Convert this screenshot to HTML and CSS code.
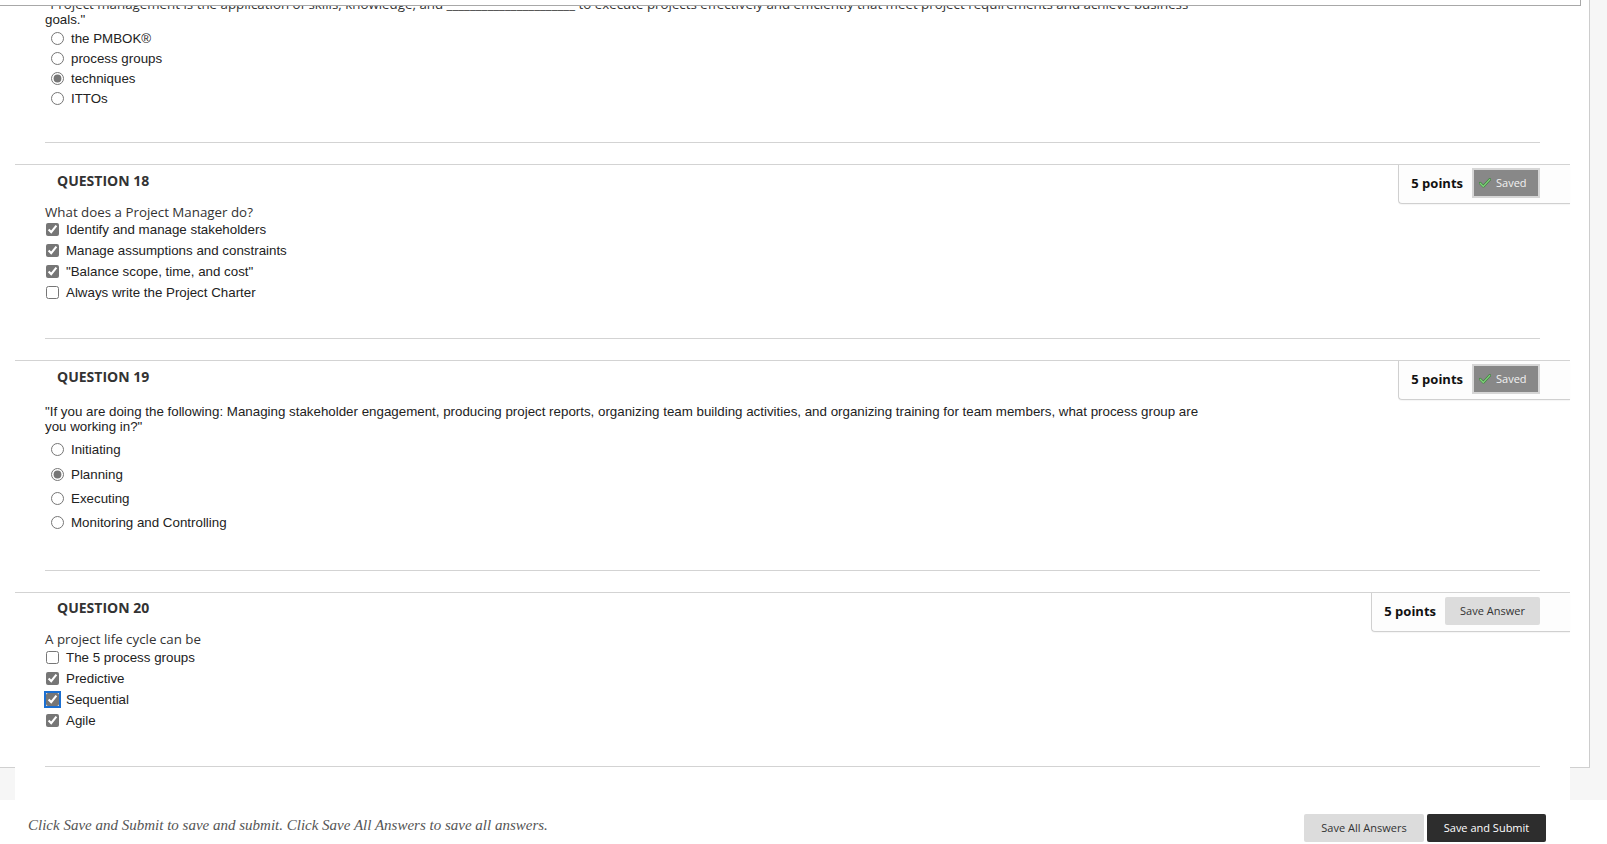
FILE: index.html
```html
<!DOCTYPE html>
<html lang="en">
<head>
<meta charset="utf-8">
<title>Test</title>
<link rel="stylesheet" href="styles.css">
</head>
<body>
<div class="topbar"></div>
<div class="frame">
  <main class="panel">
    <section class="q q-first">
      <div class="q-body">
        <p class="q-text mixed"><span class="os">"Project management is the application of skills, knowledge, and ______________________ to execute projects effectively and efficiently that meet project requirements and achieve business</span> goals."</p>
        <ul class="opts radio r20">
          <li><input type="radio" name="q17"><label>the PMBOK®</label></li>
          <li><input type="radio" name="q17"><label>process groups</label></li>
          <li><input type="radio" name="q17" checked><label>techniques</label></li>
          <li><input type="radio" name="q17"><label>ITTOs</label></li>
        </ul>
        <hr class="sep first-sep">
      </div>
    </section>

    <section class="q">
      <div class="points">
        <span class="pts">5 points</span>
        <button class="btn-saved" type="button"><svg class="ok" width="12" height="10" viewBox="0 0 12 10"><path d="M1.2 5.2 L4.4 8.4 L10.8 1.4" fill="none" stroke="#3f7d3f" stroke-width="2.6" stroke-linecap="round" stroke-linejoin="round"/><path d="M1.2 5.2 L4.4 8.4 L10.8 1.4" fill="none" stroke="#7fd27a" stroke-width="1.4" stroke-linecap="round" stroke-linejoin="round"/></svg>Saved</button>
      </div>
      <h3 class="q-title">QUESTION 18</h3>
      <div class="q-body">
        <p class="q-text">What does a Project Manager do?</p>
        <ul class="opts check">
          <li><input type="checkbox" checked><label>Identify and manage stakeholders</label></li>
          <li><input type="checkbox" checked><label>Manage assumptions and constraints</label></li>
          <li><input type="checkbox" checked><label>"Balance scope, time, and cost"</label></li>
          <li><input type="checkbox"><label>Always write the Project Charter</label></li>
        </ul>
        <hr class="sep">
      </div>
    </section>

    <section class="q">
      <div class="points">
        <span class="pts">5 points</span>
        <button class="btn-saved" type="button"><svg class="ok" width="12" height="10" viewBox="0 0 12 10"><path d="M1.2 5.2 L4.4 8.4 L10.8 1.4" fill="none" stroke="#3f7d3f" stroke-width="2.6" stroke-linecap="round" stroke-linejoin="round"/><path d="M1.2 5.2 L4.4 8.4 L10.8 1.4" fill="none" stroke="#7fd27a" stroke-width="1.4" stroke-linecap="round" stroke-linejoin="round"/></svg>Saved</button>
      </div>
      <h3 class="q-title">QUESTION 19</h3>
      <div class="q-body">
        <p class="q-text arial">"If you are doing the following: Managing stakeholder engagement, producing project reports, organizing team building activities, and organizing training for team members, what process group are you working in?"</p>
        <ul class="opts radio r24">
          <li><input type="radio" name="q19"><label>Initiating</label></li>
          <li><input type="radio" name="q19" checked><label>Planning</label></li>
          <li><input type="radio" name="q19"><label>Executing</label></li>
          <li><input type="radio" name="q19"><label>Monitoring and Controlling</label></li>
        </ul>
        <hr class="sep">
      </div>
    </section>

    <section class="q">
      <div class="points">
        <span class="pts">5 points</span>
        <button class="btn-save" type="button">Save Answer</button>
      </div>
      <h3 class="q-title">QUESTION 20</h3>
      <div class="q-body">
        <p class="q-text">A project life cycle can be</p>
        <ul class="opts check">
          <li><input type="checkbox"><label>The 5 process groups</label></li>
          <li><input type="checkbox" checked><label>Predictive</label></li>
          <li><input type="checkbox" class="focused" checked><label>Sequential</label></li>
          <li><input type="checkbox" checked><label>Agile</label></li>
        </ul>
        <hr class="sep">
      </div>
    </section>
  </main>
  <div class="strip"></div>
</div>
<div class="band">
  <div class="b-side"></div>
  <div class="b-mid"></div>
  <div class="b-side"></div>
  <div class="b-end"></div>
</div>
<footer class="footer">
  <p class="hint">Click Save and Submit to save and submit. Click Save All Answers to save all answers.</p>
  <div class="actions">
    <button class="btn btn-light" type="button">Save All Answers</button>
    <button class="btn btn-dark" type="button">Save and Submit</button>
  </div>
</footer>
</body>
</html>
```
FILE: styles.css
```css
* { box-sizing: border-box; }
html, body { margin: 0; padding: 0; overflow: hidden; background: #fff; }
body {
  width: 1607px;
  height: 844px;
  font-family: "Liberation Sans", Arial, sans-serif;
  font-size: 13.33px;
  color: #222;
}

.topbar {
  position: fixed;
  top: 0;
  left: 0;
  width: 1581px;
  height: 6px;
  background: #fff;
  border-bottom: 1px solid #a8a8a8;
  border-right: 1px solid #a8a8a8;
  z-index: 5;
}

.frame {
  display: grid;
  grid-template-columns: 1590px 17px;
}
.panel {
  background: #fff;
  border-right: 1px solid #cdcdcd;
}
.strip { background: #f6f6f6; }

.q {
  margin: 21px 0 0 15px;
  width: 1555px;
  border-top: 1px solid #d3d3d3;
}
.q-first {
  border-top: 0;
  margin-top: -3px;
}

.q-title {
  margin: 5.5px 0 0 42px;
  font: 700 14px/19px "Open Sans", sans-serif;
  color: #333;
}

.points {
  float: right;
  height: 39px;
  display: flex;
  align-items: center;
  gap: 9px;
  padding: 0 30px 2px 12px;
  background: #fdfdfd;
  border-left: 1px solid #d0d0d0;
  border-bottom: 1px solid #d0d0d0;
  border-bottom-left-radius: 4px;
  box-shadow: 0 1px 1px rgba(0,0,0,0.04);
}
.pts {
  font: 700 13px/18px "Open Sans", sans-serif;
  color: #111;
}
.btn-saved {
  display: flex;
  align-items: center;
  gap: 5px;
  width: 68px;
  height: 30px;
  padding: 0 0 0 5px;
  background: #888;
  border: 2px solid #d6d6d6;
  color: #f2f2f2;
  font: 11px/14px "Open Sans", sans-serif;
}
.btn-save {
  width: 95px;
  height: 28px;
  padding: 0;
  background: #dcdcdc;
  border: 0;
  border-radius: 2px;
  color: #333;
  font: 11px/14px "Open Sans", sans-serif;
}

.q-body { padding-left: 30px; }

.q-text {
  margin: 14px 0 0;
  max-width: 1160px;
  font: 13.33px/16px "Open Sans", sans-serif;
  color: #333;
}
.q-text.arial {
  margin-top: 18px;
  font: 13.33px/15.4px "Liberation Sans", Arial, sans-serif;
  color: #222;
}
.q-text.mixed {
  margin-top: 0;
  font: 13.33px/15px "Liberation Sans", Arial, sans-serif;
  color: #222;
}
.q-text.mixed .os {
  font-family: "Open Sans", sans-serif;
  color: #333;
}

.opts {
  list-style: none;
  margin: 0;
  padding: 0;
}
.opts li {
  display: flex;
  align-items: center;
  height: 20.9px;
}
.opts.r20 { margin-top: 1px; }
.opts.r20 li { height: 20px; }
.opts.r24 { margin-top: 3.5px; }
.opts.r24 li { height: 24.2px; }

.opts input {
  width: 13px;
  height: 13px;
  accent-color: #767676;
  flex: none;
}
.opts.radio input { margin: 0 7px 0 6px; }
.opts.check input { margin: 0 7px 0 1px; }
.opts input.focused {
  outline: 2px solid #1b6fd1;
  outline-offset: 0;
}
.opts label { white-space: nowrap; }

.sep {
  height: 0;
  margin: 35px 30px 0 0;
  border: 0;
  border-top: 1px solid #d3d3d3;
}
.sep.first-sep { margin-top: 34px; }

.band {
  display: grid;
  grid-template-columns: 15px 1555px 20px 17px;
  height: 33px;
  background: #f6f6f6;
}
.b-side { border-top: 1px solid #d0d0d0; }
.b-mid { background: #fff; }

.footer {
  display: flex;
  justify-content: space-between;
  align-items: flex-start;
  height: 45px;
  padding: 14px 61px 0 28px;
}
.hint {
  margin: 2px 0 0;
  font: italic 15px/18px "Liberation Serif", Georgia, serif;
  color: #555;
}
.actions { display: flex; gap: 3px; }
.btn {
  height: 28px;
  padding: 0;
  border: 0;
  border-radius: 2px;
  font: 11px/14px "Open Sans", sans-serif;
}
.btn-light { width: 120px; background: #dcdcdc; color: #333; }
.btn-dark { width: 119px; background: #2d2d2d; color: #fff; }
```
